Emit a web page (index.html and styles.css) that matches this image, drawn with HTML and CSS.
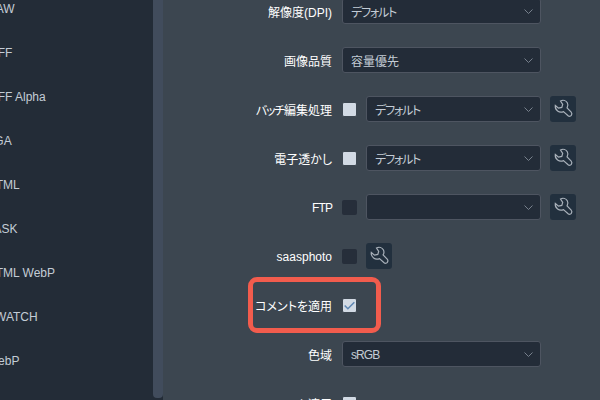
FILE: index.html
```html
<!DOCTYPE html>
<html lang="ja">
<head>
    <meta charset="UTF-8">
    <meta name="viewport" content="width=device-width, initial-scale=1.0">
    <title>書き出し設定</title>
    <link rel="stylesheet" href="styles.css">
</head>
<body>
    <svg class="icon-defs" aria-hidden="true">
        <symbol id="wrench" viewBox="0 0 26 26">
            <path d="M10.500 5C13 3.800 16 4.500 17.300 6.800c.9 1.600.8 3.500-.2 5.100l4.100 4.300c.8.900.8 2.200.1 3.200-.8 1-2.200 1.200-3.200.4l-4.600-4.200c-2 .9-4.200.7-5.900-.6C6 13.800 5 11.800 5.300 9.500l3.200 2.600 3.300-.7.900-3.100z"/>
        </symbol>
    </svg>
    <div class="app">
        <aside class="sidebar">
            <ul class="format-list">
                <li>RAW</li>
                <li>TIFF</li>
                <li>TIFF Alpha</li>
                <li>TGA</li>
                <li>HTML</li>
                <li>TASK</li>
                <li>HTML WebP</li>
                <li>SWATCH</li>
                <li>WebP</li>
            </ul>
        </aside>
        <div class="scrollbar"><div class="scrollbar-thumb"></div></div>
        <main class="settings">
            <div class="row">
                <label class="row-label">解像度(DPI)</label>
                <div class="select select-full"><span class="kana">デフォルト</span><svg class="chevron" viewBox="0 0 9 5"><path d="M.5.5l4 4 4-4"/></svg></div>
            </div>
            <div class="row">
                <label class="row-label">画像品質</label>
                <div class="select select-full"><span>容量優先</span><svg class="chevron" viewBox="0 0 9 5"><path d="M.5.5l4 4 4-4"/></svg></div>
            </div>
            <div class="row">
                <label class="row-label"><span class="kana">バッチ</span>編集処理</label>
                <span class="check check-light"></span>
                <div class="select select-short"><span class="kana">デフォルト</span><svg class="chevron" viewBox="0 0 9 5"><path d="M.5.5l4 4 4-4"/></svg></div>
                <button class="tool-btn"><svg><use href="#wrench"/></svg></button>
            </div>
            <div class="row">
                <label class="row-label">電子透かし</label>
                <span class="check check-light"></span>
                <div class="select select-short"><span class="kana">デフォルト</span><svg class="chevron" viewBox="0 0 9 5"><path d="M.5.5l4 4 4-4"/></svg></div>
                <button class="tool-btn"><svg><use href="#wrench"/></svg></button>
            </div>
            <div class="row">
                <label class="row-label latin caps">FTP</label>
                <span class="check check-dark"></span>
                <div class="select select-short"><span></span><svg class="chevron" viewBox="0 0 9 5"><path d="M.5.5l4 4 4-4"/></svg></div>
                <button class="tool-btn"><svg><use href="#wrench"/></svg></button>
            </div>
            <div class="row">
                <label class="row-label latin">saasphoto</label>
                <span class="check check-dark"></span>
                <button class="tool-btn"><svg><use href="#wrench"/></svg></button>
            </div>
            <div class="row row-highlight">
                <label class="row-label">コメントを適用</label>
                <span class="check check-light"><svg viewBox="0 0 14 14"><path d="M2.500 7l3 3 6-6"/></svg></span>
            </div>
            <div class="row">
                <label class="row-label">色域</label>
                <div class="select select-full"><span class="latin caps">sRGB</span><svg class="chevron" viewBox="0 0 9 5"><path d="M.5.5l4 4 4-4"/></svg></div>
            </div>
            <div class="row">
                <label class="row-label">ロット適用</label>
                <span class="check check-light"><svg viewBox="0 0 14 14"><path d="M2.500 7l3 3 6-6"/></svg></span>
            </div>
        </main>
    </div>
</body>
</html>
```

FILE: styles.css
```css
*, *::after {
    box-sizing: border-box;
}
html, body {
    margin: 0;
    padding: 0;
    height: 100%;
    overflow: hidden;
}
body {
    font-family: "Liberation Sans", "Noto Sans CJK JP", sans-serif;
    font-size: 12px;
    font-feature-settings: "palt";
    background-color: #3c4650;
}
.icon-defs {
    display: none;
}
.app {
    display: flex;
    height: 400px;
    overflow: hidden;
}
.sidebar {
    width: 153px;
    flex-shrink: 0;
    background-color: #232c37;
    overflow: hidden;
}
.format-list {
    list-style: none;
    margin: -13px 0 0 -13px;
    padding: 0;
}
.format-list li {
    height: 44px;
    line-height: 44px;
    color: #c3ccd6;
    white-space: nowrap;
}
.scrollbar {
    width: 10px;
    flex-shrink: 0;
    background-color: #232c37;
}
.scrollbar-thumb {
    height: 398px;
    background-color: #414c5c;
    border-radius: 0 0 4px 4px;
}
.settings {
    flex: 1;
    margin-top: -2px;
}
.row {
    position: relative;
    display: flex;
    align-items: center;
    height: 26px;
    margin-bottom: 23px;
    padding-right: 24px;
}
.row-label {
    width: 169px;
    flex-shrink: 0;
    margin-right: 10px;
    text-align: right;
    color: #fff;
    white-space: nowrap;
}
.kana {
    letter-spacing: -1.200px;
}
.latin {
    padding-top: 2px;
}
.caps {
    letter-spacing: -.9px;
}
.select {
    flex: 1;
    display: flex;
    align-items: center;
    justify-content: space-between;
    height: 26px;
    padding: 0 7px 0 8px;
    background-color: #232c38;
    border: 1px solid #4e5561;
    border-radius: 3px;
    color: #c3ccd6;
}
.select-full {
    margin-right: 35px;
}
.select-short {
    margin-left: 9px;
    margin-right: 9px;
}
.chevron {
    width: 9px;
    height: 5px;
    fill: none;
    stroke: #77808c;
    stroke-width: 1;
}
.check {
    width: 15px;
    height: 15px;
    flex-shrink: 0;
    border-radius: 2px;
}
.check svg {
    display: block;
    width: 15px;
    height: 15px;
    fill: none;
    stroke: #5f87b3;
    stroke-width: 1.500;
}
.check-light {
    background-color: #d2dae4;
    border: 1px solid #3c4650;
}
.check-light svg {
    margin: -1px;
}
.check-dark {
    background-color: #262e3a;
}
.tool-btn {
    width: 26px;
    height: 26px;
    flex-shrink: 0;
    padding: 0;
    border: none;
    border-radius: 3px;
    background-color: #22303e;
}
.check-dark + .tool-btn {
    margin-left: 9px;
}
.tool-btn svg {
    display: block;
    width: 26px;
    height: 26px;
    fill: none;
    stroke: #a9b1ba;
    stroke-width: 1.200;
}
.row-highlight::after {
    content: "";
    position: absolute;
    left: 85px;
    top: -15px;
    width: 133px;
    height: 56px;
    border: 5px solid #f25c4d;
    border-radius: 9px;
}
```
